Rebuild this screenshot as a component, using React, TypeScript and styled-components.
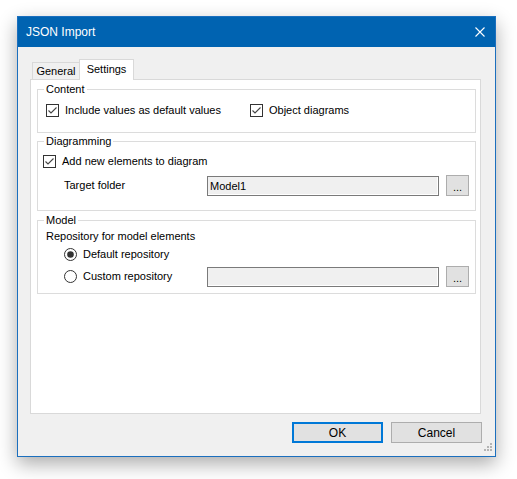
import styled, { createGlobalStyle } from 'styled-components';

const GlobalStyle = createGlobalStyle`
html, body {
    margin: 0;
    padding: 0;
    background: #ffffff;
}
body {
    min-height: 100vh;
    padding: 16px 0 0 17px;
    font-family: "Liberation Sans", Arial, sans-serif;
    font-size: 11px;
    color: #000;
}
* {
    box-sizing: border-box;
}
`;

const WindowDiv = styled.div`
width: 479px;
height: 441px;
display: flex;
flex-direction: column;
position: relative;
border: 1px solid #1b6fbe;
background-color: #f0f0f0;
box-shadow: 0 7px 18px rgba(0, 0, 0, 0.33);
`;

const TitleBar = styled.div`
height: 30px;
flex: none;
display: flex;
align-items: center;
justify-content: space-between;
padding: 0 10px 0 8px;
background-color: #0063b1;
color: #ffffff;
font-size: 12px;
`;

const CloseButton = styled.div`
width: 10px;
height: 10px;
display: flex;
`;

const ClientDiv = styled.div`
flex: 1;
display: flex;
flex-direction: column;
padding: 12px 14px 0 12px;
`;

const TabStrip = styled.div`
height: 20px;
display: flex;
align-items: flex-end;
padding-left: 2px;
position: relative;
z-index: 1;
`;

const Tab = styled.div<{ selected: boolean; width: number }>`
width: ${props => props.width}px;
height: ${props => (props.selected ? '21px' : '17px')};
margin-bottom: ${props => (props.selected ? '-1px' : '0')};
display: flex;
align-items: center;
justify-content: center;
padding-bottom: ${props => (props.selected ? '2px' : '0')};
background-color: ${props => (props.selected ? '#ffffff' : '#f0f0f0')};
border: 1px solid #d9d9d9;
border-bottom: none;
${props => (props.selected ? '' : 'border-right: none;')}
`;

const TabPanel = styled.div`
height: 335px;
flex: none;
display: flex;
flex-direction: column;
gap: 2px;
padding: 3px 4px 0 6px;
background-color: #ffffff;
border: 1px solid #d9d9d9;
`;

const Group = styled.fieldset<{ pad: string; gapTop?: number }>`
margin: ${props => props.gapTop ?? 0}px 0 0;
min-width: 0;
padding: ${props => props.pad};
border: 1px solid #dcdcdc;
display: flex;
flex-direction: column;
`;

const Legend = styled.legend`
margin-left: 6px;
padding: 0 2px;
line-height: 13px;
`;

const Row = styled.div<{ indent: number; top?: number }>`
display: flex;
align-items: center;
min-height: 13px;
margin-left: ${props => props.indent}px;
margin-top: ${props => props.top ?? 0}px;
`;

const CheckItem = styled.label<{ width?: number }>`
display: flex;
align-items: center;
gap: 6px;
line-height: 13px;
${props => (props.width ? `width: ${props.width}px;` : '')}
`;

const BoxSvg = styled.svg`
width: 13px;
height: 13px;
flex: none;
display: block;
`;

const FieldLabel = styled.div`
width: 143px;
flex: none;
line-height: 13px;
`;

const TextBox = styled.div`
width: 232px;
height: 20px;
display: flex;
align-items: center;
padding-left: 2px;
background-color: #f0f0f0;
border: 1px solid #7a7a7a;
box-shadow: inset -1px -1px 0 #ffffff;
`;

const BrowseButton = styled.div`
width: 23px;
height: 21px;
margin-left: 7px;
display: flex;
align-items: center;
justify-content: center;
padding-top: 3px;
background-color: #e1e1e1;
border: 1px solid #adadad;
`;

const PlainText = styled.div`
line-height: 13px;
`;

const ButtonRow = styled.div`
display: flex;
justify-content: flex-end;
gap: 8px;
margin-top: 8px;
margin-right: -1px;
`;

const DialogButton = styled.div<{ primary?: boolean }>`
width: 91px;
height: 21px;
display: flex;
align-items: center;
justify-content: center;
font-size: 12px;
background-color: #e1e1e1;
border: ${props => (props.primary ? '2px solid #0078d7' : '1px solid #adadad')};
`;

const Grip = styled.svg`
position: absolute;
right: 2px;
bottom: 2px;
width: 11px;
height: 11px;
`;

function CheckBox() {
    return (
        <BoxSvg viewBox="0 0 13 13">
            <rect x="0.5" y="0.5" width="12" height="12" fill="#fff" stroke="#333" />
            <polyline points="2.5,6.5 5,9 10.5,3.5" fill="none" stroke="#444" strokeWidth="1.1" />
        </BoxSvg>
    );
}

function Radio({ checked }: { checked: boolean }) {
    return (
        <BoxSvg viewBox="0 0 13 13">
            <circle cx="6.5" cy="6.5" r="6" fill="#fff" stroke="#333" />
            {checked && <circle cx="6.5" cy="6.5" r="3.3" fill="#333" />}
        </BoxSvg>
    );
}

export default function App() {
    return (
        <>
            <GlobalStyle />
            <WindowDiv>
                <TitleBar>
                    <span>JSON Import</span>
                    <CloseButton>
                        <svg width="10" height="10" viewBox="0 0 10 10">
                            <path d="M0.5 0.5 L9.5 9.5 M9.5 0.5 L0.5 9.5" stroke="#fff" strokeWidth="1.1" />
                        </svg>
                    </CloseButton>
                </TitleBar>
                <ClientDiv>
                    <TabStrip>
                        <Tab selected={false} width={47}>General</Tab>
                        <Tab selected width={55}>Settings</Tab>
                    </TabStrip>
                    <TabPanel>
                        <Group pad="8px 0 15px">
                            <Legend>Content</Legend>
                            <Row indent={8}>
                                <CheckItem width={204}>
                                    <CheckBox />
                                    Include values as default values
                                </CheckItem>
                                <CheckItem>
                                    <CheckBox />
                                    Object diagrams
                                </CheckItem>
                            </Row>
                        </Group>
                        <Group pad="7px 0 14px">
                            <Legend>Diagramming</Legend>
                            <Row indent={5}>
                                <CheckItem>
                                    <CheckBox />
                                    Add new elements to diagram
                                </CheckItem>
                            </Row>
                            <Row indent={26} top={7}>
                                <FieldLabel>Target folder</FieldLabel>
                                <TextBox>Model1</TextBox>
                                <BrowseButton>...</BrowseButton>
                            </Row>
                        </Group>
                        <Group pad="3px 0 6px" gapTop={1}>
                            <Legend>Model</Legend>
                            <Row indent={8}>
                                <PlainText>Repository for model elements</PlainText>
                            </Row>
                            <Row indent={26} top={5}>
                                <CheckItem>
                                    <Radio checked />
                                    Default repository
                                </CheckItem>
                            </Row>
                            <Row indent={26} top={5}>
                                <FieldLabel>
                                    <CheckItem>
                                        <Radio checked={false} />
                                        Custom repository
                                    </CheckItem>
                                </FieldLabel>
                                <TextBox />
                                <BrowseButton>...</BrowseButton>
                            </Row>
                        </Group>
                    </TabPanel>
                    <ButtonRow>
                        <DialogButton primary>OK</DialogButton>
                        <DialogButton>Cancel</DialogButton>
                    </ButtonRow>
                </ClientDiv>
                <Grip viewBox="0 0 11 11">
                    <g fill="#b4b4b4">
                        <rect x="8" y="0" width="2" height="2" />
                        <rect x="5" y="3" width="2" height="2" />
                        <rect x="8" y="3" width="2" height="2" />
                        <rect x="2" y="6" width="2" height="2" />
                        <rect x="5" y="6" width="2" height="2" />
                        <rect x="8" y="6" width="2" height="2" />
                    </g>
                </Grip>
            </WindowDiv>
        </>
    );
}
